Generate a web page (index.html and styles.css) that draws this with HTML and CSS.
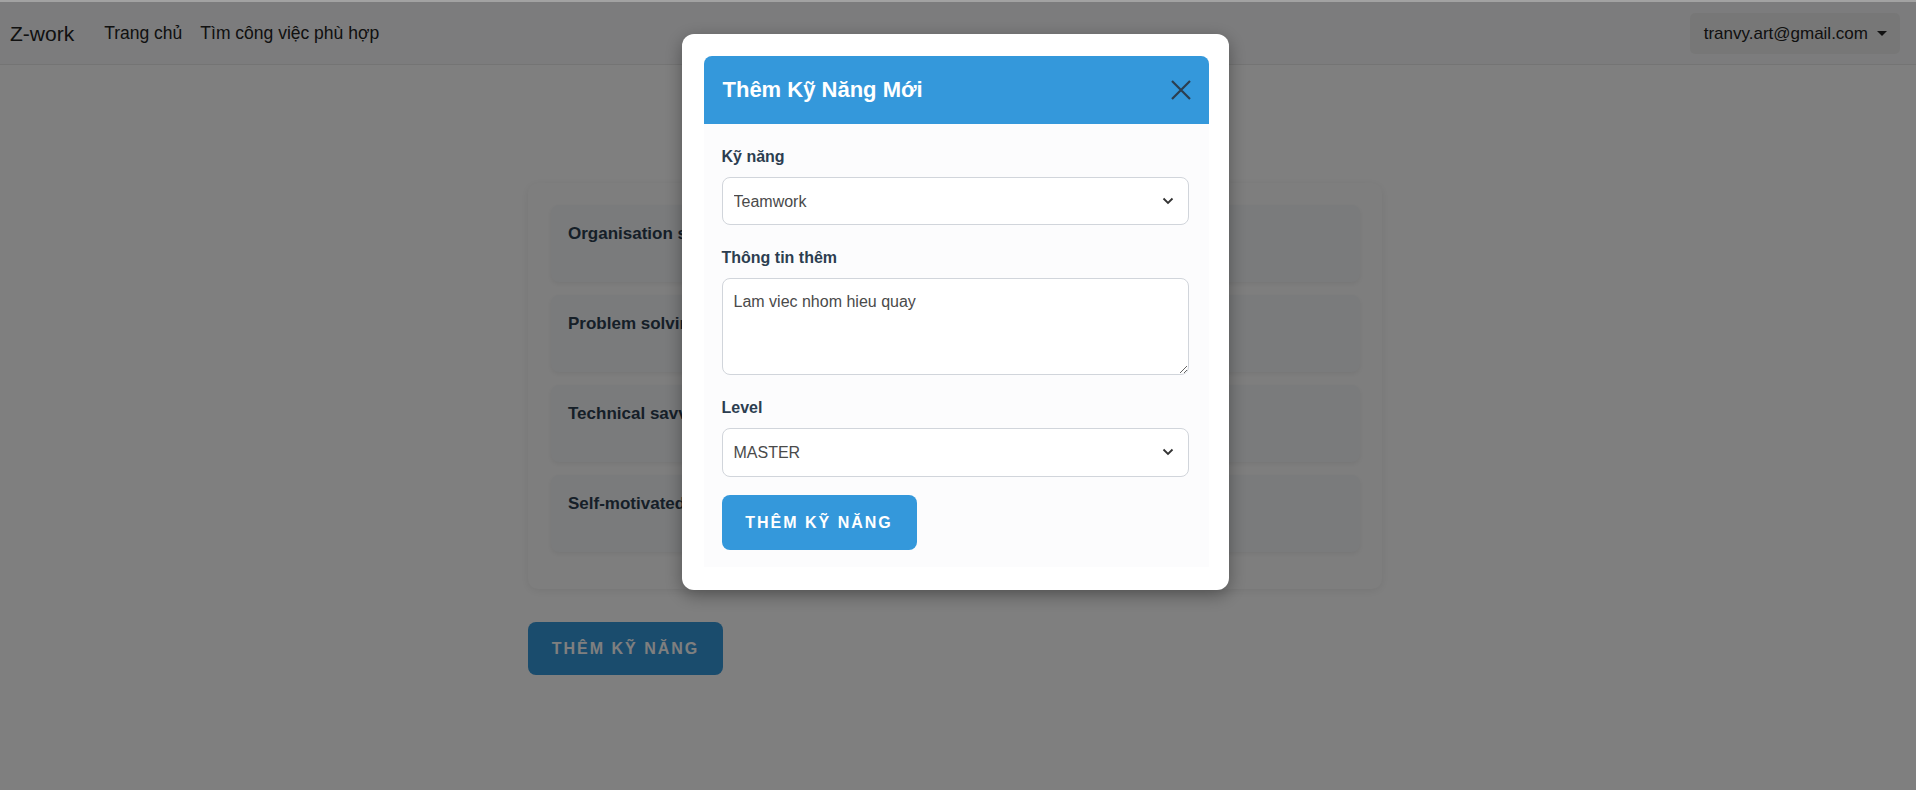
FILE: index.html
```html
<!DOCTYPE html>
<html lang="vi">
<head>
<meta charset="utf-8">
<title>Z-work</title>
<link rel="stylesheet" href="styles.css">
</head>
<body>
<nav class="navbar">
  <div class="nav-left">
    <a class="brand" href="#">Z-work</a>
    <a class="nav-link" href="#">Trang chủ</a>
    <a class="nav-link" href="#">Tìm công việc phù hợp</a>
  </div>
  <button class="user-btn">tranvy.art@gmail.com <span class="caret"></span></button>
</nav>

<main class="container">
  <section class="card">
    <div class="skill-item"><h3 class="skill-name">Organisation skills</h3></div>
    <div class="skill-item"><h3 class="skill-name">Problem solving</h3></div>
    <div class="skill-item"><h3 class="skill-name">Technical savvy</h3></div>
    <div class="skill-item"><h3 class="skill-name">Self-motivated</h3></div>
  </section>
  <button class="btn btn-primary">THÊM KỸ NĂNG</button>
</main>

<div class="overlay">
  <div class="modal">
    <div class="modal-header">
      <h2 class="modal-title">Thêm Kỹ Năng Mới</h2>
      <button class="close-btn" aria-label="Đóng">
        <svg width="22" height="22" viewBox="0 0 22 22"><path d="M2 2 L20 20 M20 2 L2 20" stroke="#2c3e50" stroke-width="2.2" fill="none"/></svg>
      </button>
    </div>
    <div class="modal-body">
      <div class="form-group">
        <label class="form-label">Kỹ năng</label>
        <div class="select-wrap">
          <select class="form-control"><option>Teamwork</option></select>
          <svg class="chevron" width="12" height="8" viewBox="0 0 12 8"><polyline points="1.5,1.5 6,6 10.5,1.5" fill="none" stroke="#333" stroke-width="1.8"/></svg>
        </div>
      </div>
      <div class="form-group group-text">
        <label class="form-label">Thông tin thêm</label>
        <textarea class="form-textarea">Lam viec nhom hieu quay</textarea>
      </div>
      <div class="form-group">
        <label class="form-label">Level</label>
        <div class="select-wrap">
          <select class="form-control control-tall"><option>MASTER</option></select>
          <svg class="chevron" width="12" height="8" viewBox="0 0 12 8"><polyline points="1.5,1.5 6,6 10.5,1.5" fill="none" stroke="#333" stroke-width="1.8"/></svg>
        </div>
      </div>
      <button class="btn btn-primary btn-submit">THÊM KỸ NĂNG</button>
    </div>
  </div>
</div>
</body>
</html>
```
FILE: styles.css
```css
* { box-sizing: border-box; }

html, body {
  margin: 0;
  padding: 0;
  background: #ffffff;
  font-family: "Liberation Sans", Arial, sans-serif;
  color: #222;
}

.navbar {
  height: 65px;
  background: #f8f9fa;
  border-bottom: 1px solid #e9e9e9;
  display: flex;
  align-items: center;
  justify-content: space-between;
  padding: 3px 16px 0 10px;
}

.nav-left {
  display: flex;
  align-items: center;
}

.brand {
  font-size: 21px;
  color: #222;
  text-decoration: none;
  margin-right: 30px;
}

.nav-link {
  font-size: 17.5px;
  color: #222;
  text-decoration: none;
  margin-right: 18px;
}

.user-btn {
  height: 41px;
  padding: 0 13px 0 14px;
  background: #efefef;
  border: none;
  border-radius: 5px;
  font-family: "Liberation Sans", Arial, sans-serif;
  font-size: 17px;
  color: #222;
  display: flex;
  align-items: center;
  gap: 9px;
}

.caret {
  width: 0;
  height: 0;
  border-left: 5px solid transparent;
  border-right: 5px solid transparent;
  border-top: 5px solid #222;
}

.container {
  width: 854px;
  margin: 118px auto 0;
  position: relative;
  left: -3px;
}

.card {
  background: #fcfcfc;
  border-radius: 10px;
  box-shadow: 0 2px 10px rgba(0,0,0,0.08);
  padding: 22px 22px 24px 23px;
}

.skill-item {
  height: 77px;
  background: #f4f6f8;
  border-radius: 8px;
  box-shadow: 0 2px 4px rgba(0,0,0,0.06);
  padding: 19px 17px;
  margin-bottom: 13px;
}

.skill-name {
  margin: 0;
  font-size: 17px;
  font-weight: bold;
  color: #2c3e50;
  line-height: 20px;
}

.btn {
  font-family: "Liberation Sans", Arial, sans-serif;
  font-weight: bold;
  font-size: 16px;
  letter-spacing: 2px;
  white-space: nowrap;
  text-align: center;
  color: #fff;
  border: none;
  border-radius: 8px;
  padding: 0;
  cursor: pointer;
}

.btn-primary {
  background: #3498db;
  height: 53px;
  width: 195px;
  margin-top: 33px;
}

/* Modal */
.overlay {
  position: fixed;
  inset: 0;
  background: rgba(0,0,0,0.5);
  border-top: 2px solid #a2a2a2;
  display: flex;
  justify-content: center;
  align-items: flex-start;
  padding-top: 32px;
}

.modal {
  width: 547px;
  background: #ffffff;
  border-radius: 12px;
  box-shadow: 0 5px 18px rgba(0,0,0,0.35);
  padding: 22px 20px 23px 22px;
  position: relative;
  left: -3px;
}

.modal-header {
  height: 68px;
  background: #3498db;
  border-radius: 8px 8px 0 0;
  display: flex;
  align-items: center;
  justify-content: space-between;
  padding: 0 17px 0 19px;
}

.modal-title {
  margin: 0;
  color: #ffffff;
  font-size: 22px;
  font-weight: bold;
}

.close-btn {
  background: none;
  border: none;
  padding: 0;
  width: 22px;
  height: 22px;
  display: flex;
}

.modal-body {
  background: #fcfcfd;
  padding: 23px 20px 17px 18px;
}

.form-group {
  margin-bottom: 23px;
}

.group-text {
  margin-bottom: 23px;
}

.form-label {
  display: block;
  font-size: 16px;
  font-weight: bold;
  color: #2c3e50;
  line-height: 19px;
  margin-bottom: 11px;
}

.select-wrap {
  position: relative;
}

.form-control {
  display: block;
  width: 100%;
  height: 48px;
  -webkit-appearance: none;
  appearance: none;
  background: #ffffff;
  border: 1px solid #d1d5db;
  border-radius: 8px;
  padding: 0 40px 0 11px;
  font-family: "Liberation Sans", Arial, sans-serif;
  font-size: 16px;
  color: #4a4a4a;
}

.control-tall {
  height: 49px;
}

.chevron {
  position: absolute;
  right: 15px;
  top: 20px;
  pointer-events: none;
}

.form-textarea {
  display: block;
  width: 100%;
  height: 97px;
  margin-top: 2px;
  background: #ffffff;
  border: 1px solid #d1d5db;
  border-radius: 8px;
  padding: 11px 11px;
  font-family: "Liberation Sans", Arial, sans-serif;
  font-size: 16px;
  line-height: 24px;
  color: #4a4a4a;
  resize: vertical;
}

.btn-submit {
  margin-top: -5px;
  height: 55px;
  width: 195px;
}
```
